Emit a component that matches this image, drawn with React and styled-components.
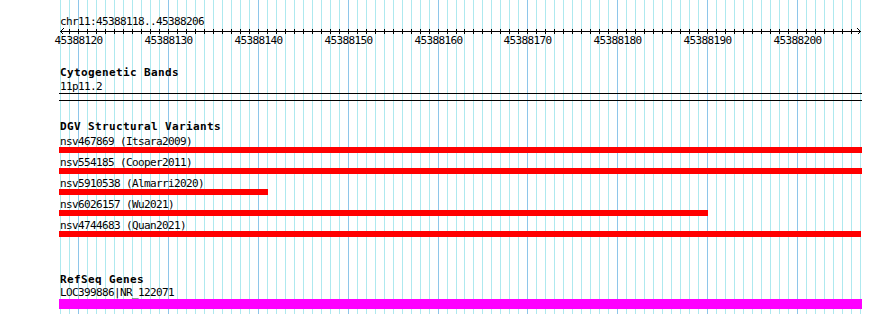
import React from 'react';
import styled, { createGlobalStyle } from 'styled-components';

const GlobalStyle = createGlobalStyle`
    html, body {
        margin: 0;
        padding: 0;
        background: #ffffff;
    }
`;

// window coordinates: 89 bases over 800px starting at x = 60
const VIEW_LEFT = 59;
const BASE_START = 45388118;
const BASE_COUNT = 89;
const STEP = 800 / BASE_COUNT;
const baseX = k => Math.round(60 + k * STEP);

const MONO = `"DejaVu Sans Mono", "Liberation Mono", monospace`;

const Page = styled.div`
    position: relative;
    width: 890px;
    height: 314px;
    overflow: hidden;
    background: #ffffff;
    font-family: ${MONO};
    color: #000000;
`;

const Guides = styled.svg`
    position: absolute;
    top: 0;
    left: 0;
    z-index: 0;
`;

const Content = styled.div`
    position: relative;
    z-index: 1;
    display: flex;
    flex-direction: column;
    padding: 15px 0 0 ${VIEW_LEFT}px;
`;

const Position = styled.div`
    font-size: 11px;
    line-height: 13px;
    letter-spacing: -0.62px;
    padding-left: 1px;
    white-space: nowrap;
`;

const RulerSvg = styled.svg`
    display: block;
    overflow: visible;
    shape-rendering: crispEdges;

    text {
        font-family: ${MONO};
        font-size: 11px;
        letter-spacing: -0.62px;
        fill: #000000;
    }
`;

const Track = styled.section`
    display: flex;
    flex-direction: column;
    margin-top: ${props => props.$gap}px;
`;

const TrackTitle = styled.div`
    font-size: 11px;
    font-weight: bold;
    line-height: 14px;
    letter-spacing: 0.38px;
    padding-left: 1px;
    white-space: nowrap;
`;

const BandLabel = styled.div`
    font-size: 11px;
    line-height: 13px;
    letter-spacing: -0.62px;
    padding-left: 1px;
`;

const Band = styled.div`
    width: 803px;
    height: 8px;
    box-sizing: border-box;
    border-top: 1px solid #000000;
    border-bottom: 1px solid #000000;
`;

const Features = styled.div`
    display: flex;
    flex-direction: column;
    gap: 4px;
    margin-top: ${props => props.$gap}px;
`;

const Feature = styled.div`
    display: flex;
    flex-direction: column;
`;

const FeatureLabel = styled.div`
    position: relative;
    z-index: 1;
    font-size: 11px;
    line-height: 11px;
    height: 11px;
    letter-spacing: -0.62px;
    padding-left: 1px;
    white-space: nowrap;
`;

const Bar = styled.div`
    height: ${props => props.$thick}px;
    margin-top: ${props => props.$space || 0}px;
    background: ${props => props.$color};
`;

const variants = [
    { name: 'nsv467869 (Itsara2009)', width: 803 },
    { name: 'nsv554185 (Cooper2011)', width: 803 },
    { name: 'nsv5910538 (Almarri2020)', width: 209 },
    { name: 'nsv6026157 (Wu2021)', width: 649 },
    { name: 'nsv4744683 (Quan2021)', width: 802 },
];

const GuideLines = () => (
    <Guides width="890" height="314" shapeRendering="crispEdges">
        {Array.from({ length: BASE_COUNT + 1 }, (_, k) => (
            <rect
                key={k}
                x={baseX(k)}
                y="0"
                width="1"
                height="314"
                fill={k % 10 === 2 ? '#8ec6ea' : '#aee9ef'}
            />
        ))}
    </Guides>
);

const Ruler = () => {
    const x = k => baseX(k) - VIEW_LEFT;
    const ticks = Array.from({ length: BASE_COUNT - 1 }, (_, i) => i + 1);
    const labels = [2, 12, 22, 32, 42, 52, 62, 72, 82];
    return (
        <RulerSvg width="803" height="18">
            <rect x="1" y="3" width="801" height="1" fill="#000" />
            {ticks.map(k => (
                <rect key={k} x={x(k)} y="1" width="1" height="5" fill="#000" />
            ))}
            <polyline points="4.5,0.5 1.5,3.5 4.5,6.5" fill="none" stroke="#000" />
            <polyline points="798.5,0.5 801.5,3.5 798.5,6.5" fill="none" stroke="#000" />
            {labels.map(k => (
                <text key={k} x={x(k) + 0.5} y="16" textAnchor="middle">
                    {BASE_START + k}
                </text>
            ))}
        </RulerSvg>
    );
};

const App = () => {
    return (
        <Page>
            <GlobalStyle />
            <GuideLines />
            <Content>
                <Position>chr11:45388118..45388206</Position>
                <Ruler />

                <Track $gap={20}>
                    <TrackTitle>Cytogenetic Bands</TrackTitle>
                    <BandLabel>11p11.2</BandLabel>
                    <Band />
                </Track>

                <Track $gap={19}>
                    <TrackTitle>DGV Structural Variants</TrackTitle>
                    <Features $gap={2}>
                        {variants.map(v => (
                            <Feature key={v.name}>
                                <FeatureLabel>{v.name}</FeatureLabel>
                                <Bar $thick={6} $color="#ff0000" style={{ width: v.width }} />
                            </Feature>
                        ))}
                    </Features>
                </Track>

                <Track $gap={36}>
                    <TrackTitle>RefSeq Genes</TrackTitle>
                    <Features $gap={0}>
                        <Feature>
                            <FeatureLabel>LOC399886|NR_122071</FeatureLabel>
                            <Bar $thick={10} $space={1} $color="#ff00ff" style={{ width: 803 }} />
                        </Feature>
                    </Features>
                </Track>
            </Content>
        </Page>
    );
};

export default App;
